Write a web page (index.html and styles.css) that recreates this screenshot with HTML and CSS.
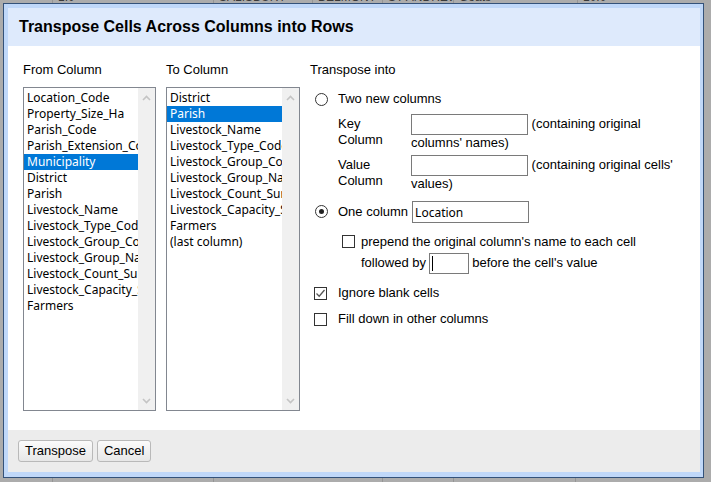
FILE: index.html
```html
<!DOCTYPE html>
<html>
<head>
<meta charset="utf-8">
<link rel="stylesheet" href="styles.css">
</head>
<body>
<div class="sheet">
  <div class="sheet-row top-row">
    <span class="cell w52"></span>
    <span class="cell w161">1.0</span>
    <span class="cell w99">SALISBURY</span>
    <span class="cell w70">BELMONT</span>
    <span class="cell w71">ST ANDREW</span>
    <span class="cell w124">Goats</span>
    <span class="cell">10.0</span>
  </div>
  <div class="sheet-row bottom-row">
    <span class="cell w52"></span>
    <span class="cell w161"></span>
    <span class="cell w169"></span>
    <span class="cell w71"></span>
    <span class="cell w122"></span>
    <span class="cell"></span>
  </div>
</div>

<div class="dialog">
  <div class="dialog-header">Transpose Cells Across Columns into Rows</div>
  <div class="dialog-body">
    <div class="list-col from-col">
      <div class="col-label">From Column</div>
      <div class="listbox">
        <div class="items">
          <div class="item">Location_Code</div>
          <div class="item">Property_Size_Ha</div>
          <div class="item">Parish_Code</div>
          <div class="item">Parish_Extension_Code</div>
          <div class="item selected">Municipality</div>
          <div class="item">District</div>
          <div class="item">Parish</div>
          <div class="item">Livestock_Name</div>
          <div class="item">Livestock_Type_Code</div>
          <div class="item">Livestock_Group_Code</div>
          <div class="item">Livestock_Group_Name</div>
          <div class="item">Livestock_Count_Sum</div>
          <div class="item">Livestock_Capacity_Sum</div>
          <div class="item">Farmers</div>
        </div>
        <div class="scrollbar">
          <svg class="chev" width="9" height="6" viewBox="0 0 9 6"><path d="M1 5 L4.5 1.5 L8 5" fill="none" stroke="#c4c4c4" stroke-width="1.6"/></svg>
          <svg class="chev" width="9" height="6" viewBox="0 0 9 6"><path d="M1 1 L4.5 4.5 L8 1" fill="none" stroke="#c4c4c4" stroke-width="1.6"/></svg>
        </div>
      </div>
    </div>
    <div class="list-col to-col">
      <div class="col-label">To Column</div>
      <div class="listbox">
        <div class="items">
          <div class="item">District</div>
          <div class="item selected">Parish</div>
          <div class="item">Livestock_Name</div>
          <div class="item">Livestock_Type_Code</div>
          <div class="item">Livestock_Group_Code</div>
          <div class="item">Livestock_Group_Name</div>
          <div class="item">Livestock_Count_Sum</div>
          <div class="item">Livestock_Capacity_Sum</div>
          <div class="item">Farmers</div>
          <div class="item">(last column)</div>
        </div>
        <div class="scrollbar">
          <svg class="chev" width="9" height="6" viewBox="0 0 9 6"><path d="M1 5 L4.5 1.5 L8 5" fill="none" stroke="#c4c4c4" stroke-width="1.6"/></svg>
          <svg class="chev" width="9" height="6" viewBox="0 0 9 6"><path d="M1 1 L4.5 4.5 L8 1" fill="none" stroke="#c4c4c4" stroke-width="1.6"/></svg>
        </div>
      </div>
    </div>
    <div class="options-col">
      <div class="col-label">Transpose into</div>
      <div class="opt-row radio-row two-row">
        <span class="radio"></span>
        <span>Two new columns</span>
      </div>
      <div class="field-row key-row">
        <div class="field-label">Key<br>Column</div>
        <div class="field-content"><input class="field wide" type="text"> (containing original columns' names)</div>
      </div>
      <div class="field-row value-row">
        <div class="field-label">Value<br>Column</div>
        <div class="field-content"><input class="field wide" type="text"> (containing original cells' values)</div>
      </div>
      <div class="opt-row radio-row one-row">
        <span class="radio checked"></span>
        <span>One column</span>
        <input class="field wide loc" type="text" value="Location">
      </div>
      <div class="prepend-row">
        <span class="checkbox"></span>
        <div class="prepend-text">
          <div class="line1">prepend the original column's name to each cell</div>
          <div class="line2">followed by <span class="field small focused"><span class="caret"></span></span> before the cell's value</div>
        </div>
      </div>
      <div class="opt-row check-row ignore-row">
        <span class="checkbox checked"><svg width="11" height="11" viewBox="0 0 11 11"><path d="M1.5 5.5 L4.2 8.2 L9.5 2" fill="none" stroke="#555" stroke-width="1.3"/></svg></span>
        <span>Ignore blank cells</span>
      </div>
      <div class="opt-row check-row fill-row">
        <span class="checkbox"></span>
        <span>Fill down in other columns</span>
      </div>
    </div>
  </div>
  <div class="dialog-footer">
    <button class="btn" type="button">Transpose</button>
    <button class="btn" type="button">Cancel</button>
  </div>
</div>
</body>
</html>
```
FILE: styles.css
```css
html, body {
  margin: 0;
  padding: 0;
}
body {
  width: 711px;
  height: 482px;
  overflow: hidden;
  position: relative;
  background: #acacac;
  font-family: "Liberation Sans", Arial, sans-serif;
  font-size: 13px;
  color: #000;
}

/* faded spreadsheet behind the overlay */
.sheet {
  height: 482px;
  display: flex;
  flex-direction: column;
  justify-content: space-between;
}
.sheet-row {
  display: flex;
  height: 14px;
  color: #3a3a3a;
  font-size: 12px;
  line-height: 14px;
}
.top-row {
  margin-top: -10px;
}
.bottom-row {
  margin-bottom: -10px;
}
.cell {
  box-sizing: border-box;
  border-right: 1px solid #959595;
  padding-left: 5px;
  white-space: nowrap;
  overflow: hidden;
}
.cell:last-child { flex: 1; border-right: none; }
.w52 { width: 53px; }
.w161 { width: 161px; }
.w99 { width: 99px; }
.w70 { width: 70px; }
.w71 { width: 71px; }
.w124 { width: 124px; }
.w169 { width: 169px; }
.w122 { width: 122px; }

/* dialog */
.dialog {
  position: absolute;
  left: 3px;
  top: 3px;
  width: 701px;
  height: 475px;
  box-sizing: border-box;
  border: 1px solid #34527a;
  background: #c0d8f9;
  padding: 4px 3px 5px 4px;
  display: flex;
  flex-direction: column;
}
.dialog-header {
  height: 38px;
  flex: none;
  background: #deeafc;
  display: flex;
  align-items: center;
  padding-left: 11px;
  font-size: 16px;
  font-weight: bold;
}
.dialog-body {
  height: 384px;
  flex: none;
  box-sizing: border-box;
  background: #fff;
  display: flex;
  gap: 10px;
  padding: 16px 0 0 15px;
}
.col-label {
  line-height: 15px;
  height: 15px;
}
.from-col { width: 133px; }
.to-col { width: 134px; }
.listbox {
  margin-top: 10px;
  height: 324px;
  box-sizing: border-box;
  border: 1px solid #828790;
  display: flex;
}
.items {
  flex: 1;
  min-width: 0;
  overflow: hidden;
  padding-top: 2px;
}
.item {
  font-family: "Noto Sans", "DejaVu Sans", sans-serif;
  font-size: 12px;
  line-height: 16px;
  height: 16px;
  padding-left: 3px;
  white-space: nowrap;
  overflow: hidden;
  color: #000;
}
.item.selected {
  background: #0078d7;
  color: #fff;
}
.scrollbar {
  width: 17px;
  flex: none;
  background: #f0f0f0;
  display: flex;
  flex-direction: column;
  justify-content: space-between;
  align-items: center;
  padding: 7px 0 6px;
  box-sizing: border-box;
}
.chev { display: block; }

/* options */
.options-col {
  width: 375px;
}
.opt-row {
  display: flex;
  align-items: center;
  line-height: 16px;
}
.radio {
  width: 13px;
  height: 13px;
  box-sizing: border-box;
  border: 1px solid #333;
  border-radius: 50%;
  background: #fff;
  margin-left: 5px;
  margin-right: 10px;
  flex: none;
  display: flex;
  align-items: center;
  justify-content: center;
}
.radio.checked::after {
  content: "";
  width: 5px;
  height: 5px;
  border-radius: 50%;
  background: #222;
}
.two-row { margin-top: 14px; }
.field-row {
  display: flex;
  padding-left: 28px;
  line-height: 16px;
}
.key-row { margin-top: 7px; }
.value-row { margin-top: 4px; }
.field-label {
  width: 73px;
  flex: none;
  padding-top: 2px;
}
.field-content {
  flex: 1;
}
.field {
  box-sizing: border-box;
  height: 21px;
  border: 1px solid #7a7a7a;
  background: #fff;
  vertical-align: middle;
  margin: 0;
  padding: 0 2px;
  font-family: "Noto Sans", "DejaVu Sans", sans-serif;
  font-size: 12px;
  color: #000;
  outline: none;
  border-radius: 0;
}
.field.wide { width: 117px; }
.loc { margin-left: 4px; height: 22px; }
.one-row { margin-top: 9px; }
.one-row .radio { margin-top: -2px; }
.field.small {
  display: inline-block;
  width: 40px;
  position: relative;
}
.caret {
  position: absolute;
  left: 2px;
  top: 2px;
  width: 1px;
  height: 15px;
  background: #000;
}
.prepend-row {
  display: flex;
  align-items: flex-start;
  margin-top: 11px;
  line-height: 16px;
}
.checkbox {
  width: 13px;
  height: 13px;
  box-sizing: border-box;
  border: 1px solid #333;
  background: #fff;
  flex: none;
  display: flex;
  align-items: center;
  justify-content: center;
  margin-left: 4px;
  margin-right: 11px;
}
.prepend-row .checkbox {
  margin-left: 32px;
  margin-right: 6px;
  margin-top: 1px;
}
.line2 {
  margin-top: 3px;
}
.line2 .field { margin: 0 0 0 -1px; }
.ignore-row { margin-top: 11px; }
.fill-row { margin-top: 10px; }

/* footer */
.dialog-footer {
  height: 42px;
  flex: none;
  box-sizing: border-box;
  background: #ececec;
  display: flex;
  align-items: flex-start;
  gap: 4px;
  padding: 10px 0 0 10px;
}
.btn {
  height: 22px;
  box-sizing: border-box;
  border: 1px solid #b9b9b9;
  border-radius: 3px;
  background: linear-gradient(#fbfbfb, #e7e7e7);
  font-family: "Liberation Sans", Arial, sans-serif;
  font-size: 13px;
  color: #000;
  padding: 0 6px;
  margin: 0;
  line-height: 20px;
}
```
